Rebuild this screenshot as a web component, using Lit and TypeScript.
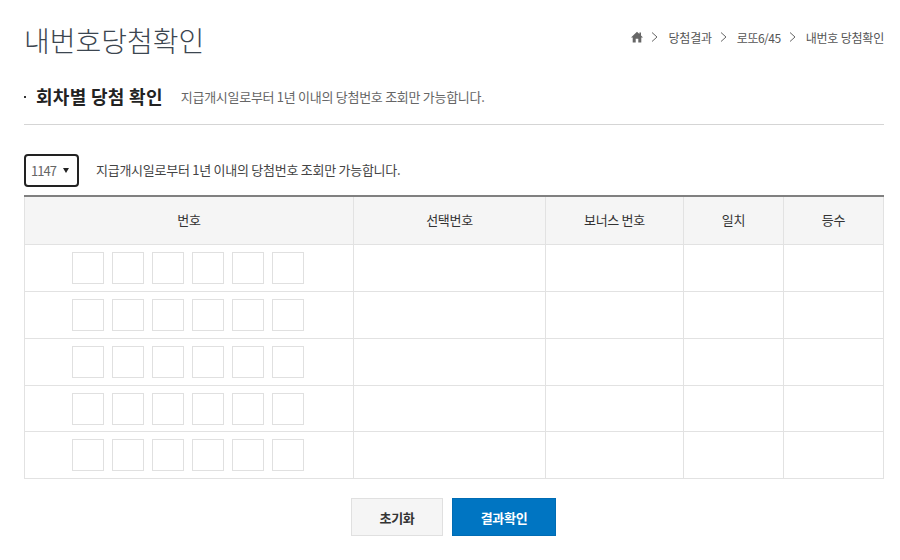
import { css, html, LitElement, svg } from "lit";
import { customElement } from "lit/decorators.js";

const HEADS = ["번호", "선택번호", "보너스 번호", "일치", "등수"];
const ROWS = [0, 1, 2, 3, 4];
const BOXES = [0, 1, 2, 3, 4, 5];
const NOTICE = "지급개시일로부터 1년 이내의 당첨번호 조회만 가능합니다.";

@customElement("app-root")
export class AppRoot extends LitElement {
  static override styles = css`
    :host {
      display: block;
      width: 900px;
      height: 560px;
      box-sizing: border-box;
      padding: 0 16px 0 24px;
      background: #fff;
      overflow: hidden;
      font-family: "Noto Sans CJK KR", "Noto Sans", sans-serif;
      color: #333;
      letter-spacing: -0.3px;
    }

    .top {
      display: flex;
      justify-content: space-between;
      align-items: flex-start;
      height: 86px;
    }

    h1 {
      margin: 19px 0 0;
      font-size: 28px;
      line-height: 42px;
      font-weight: 300;
      letter-spacing: 0;
      color: #3c4650;
    }

    .crumbs {
      display: flex;
      align-items: center;
      margin-top: 27px;
      height: 20px;
      font-size: 12px;
      letter-spacing: -0.2px;
      color: #555;
    }

    .tight {
      letter-spacing: -0.5px;
    }

    .home {
      width: 12px;
      height: 12px;
      fill: #666;
    }

    .chev {
      width: 7px;
      height: 10px;
      margin: 0 10px 0 8px;
      fill: none;
      stroke: #666;
      stroke-width: 1;
    }

    .section {
      display: flex;
      align-items: center;
      height: 38px;
      border-bottom: 1px solid #d5d5d5;
    }

    .section-inner {
      display: flex;
      align-items: center;
      height: 22px;
      margin-bottom: 18px;
    }

    .dot {
      width: 2px;
      height: 2px;
      margin: 2px 10px 0 0;
      background: #333;
    }

    h2 {
      margin: 0 18px 0 0;
      font-size: 18px;
      font-weight: 700;
      letter-spacing: 0.3px;
      color: #222;
    }

    .sub {
      font-size: 13px;
      letter-spacing: -0.28px;
      color: #666;
    }

    .query {
      display: flex;
      align-items: center;
      gap: 17px;
      margin-top: 29px;
      height: 33px;
    }

    .select {
      display: flex;
      align-items: center;
      justify-content: space-between;
      box-sizing: border-box;
      width: 55px;
      height: 33px;
      padding: 0 8px 0 5px;
      border: 2px solid #222;
      border-radius: 4px;
      font-size: 13px;
      letter-spacing: -1px;
      color: #666;
    }

    .caret {
      width: 0;
      height: 0;
      border-left: 3.5px solid transparent;
      border-right: 3.5px solid transparent;
      border-top: 5px solid #222;
    }

    .note {
      margin-bottom: 2px;
      font-size: 13px;
      letter-spacing: -0.26px;
      color: #444;
    }

    table {
      width: 859px;
      margin-top: 8px;
      border-collapse: collapse;
      table-layout: fixed;
      border-top: 2px solid #808080;
    }

    th,
    td {
      padding: 0;
      border: 1px solid #e2e2e2;
    }

    th {
      height: 45px;
      padding-bottom: 2px;
      background: #f5f5f5;
      font-size: 13px;
      font-weight: 400;
      color: #333;
    }

    td {
      height: 46px;
    }

    tbody tr:nth-child(4) td {
      height: 45px;
    }

    .boxes {
      display: flex;
      justify-content: center;
      gap: 8px;
      padding-right: 3px;
    }

    .box {
      box-sizing: border-box;
      width: 32px;
      height: 32px;
      border: 1px solid #e0e0e0;
    }

    .actions {
      display: flex;
      justify-content: center;
      gap: 9px;
      margin-top: 19px;
      padding-right: 1px;
    }

    .btn {
      box-sizing: border-box;
      height: 38px;
      font-family: inherit;
      font-size: 13px;
      font-weight: 700;
      letter-spacing: -0.3px;
      cursor: pointer;
    }

    .reset {
      width: 92px;
      background: #f5f5f5;
      border: 1px solid #e0e0e0;
      color: #333;
    }

    .confirm {
      width: 104px;
      background: #0075c2;
      border: 1px solid #006cb4;
      color: #fff;
    }
  `;

  private renderChevron() {
    return svg`
      <svg class="chev" viewBox="0 0 7 10">
        <path d="M1 .5 6 5 1 9.5"></path>
      </svg>
    `;
  }

  private renderRow() {
    return html`
      <tr>
        <td>
          <div class="boxes">
            ${BOXES.map(() => html`<span class="box"></span>`)}
          </div>
        </td>
        <td></td>
        <td></td>
        <td></td>
        <td></td>
      </tr>
    `;
  }

  override render() {
    return html`
      <header class="top">
        <h1>내번호당첨확인</h1>
        <nav class="crumbs">
          <svg class="home" viewBox="0 0 12 12">
            <path d="M6 .8 0 6.4h1.7V11.4h3V7.8h2.6v3.6h3V6.4H12L10 4.5V1.4H8.4V3Z"></path>
          </svg>
          ${this.renderChevron()}
          <span>당첨결과</span>
          ${this.renderChevron()}
          <span class="tight">로또6/45</span>
          ${this.renderChevron()}
          <span>내번호 당첨확인</span>
        </nav>
      </header>

      <section class="section">
        <div class="section-inner">
          <span class="dot"></span>
          <h2>회차별 당첨 확인</h2>
          <span class="sub">${NOTICE}</span>
        </div>
      </section>

      <div class="query">
        <div class="select"><span>1147</span><span class="caret"></span></div>
        <span class="note">${NOTICE}</span>
      </div>

      <table>
        <colgroup>
          <col style="width: 329px" />
          <col style="width: 192px" />
          <col style="width: 138px" />
          <col style="width: 100px" />
          <col style="width: 100px" />
        </colgroup>
        <thead>
          <tr>
            ${HEADS.map((h) => html`<th>${h}</th>`)}
          </tr>
        </thead>
        <tbody>
          ${ROWS.map(() => this.renderRow())}
        </tbody>
      </table>

      <div class="actions">
        <button class="btn reset" type="button">초기화</button>
        <button class="btn confirm" type="button">결과확인</button>
      </div>
    `;
  }
}

declare global {
  interface HTMLElementTagNameMap {
    "app-root": AppRoot;
  }
}
